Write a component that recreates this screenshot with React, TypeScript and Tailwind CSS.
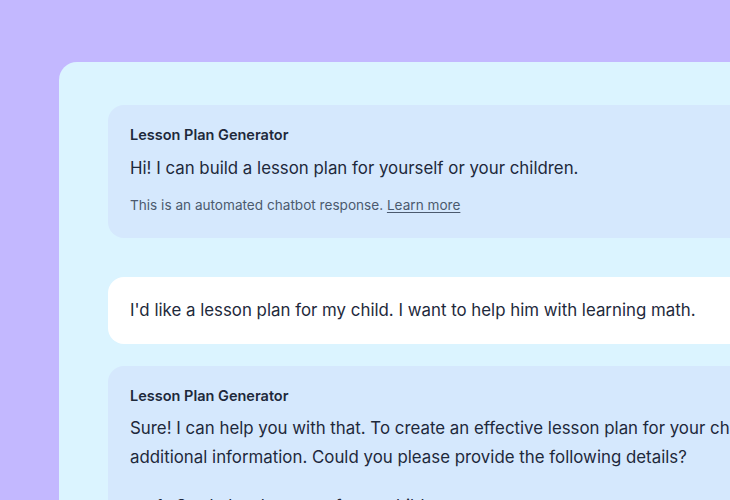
export default function App() {
    return (
        <div className="w-[730px] h-[500px] overflow-hidden bg-[#c3b8ff] pl-[59px] pt-[62px] font-['Inter',sans-serif]">
            <div className="w-[900px] h-[600px] bg-[#dbf4ff] rounded-[18px] pl-[49px] pt-[43px] flex flex-col">
                <div className="w-[820px] bg-[#d5e8fd] rounded-2xl pl-[22px] pt-5 pb-[23px]">
                    <p className="text-[14.5px] font-semibold text-[#1e293b] leading-5">Lesson Plan Generator</p>
                    <p className="mt-[9px] text-[16.85px] leading-7 text-[#1e293b]">Hi! I can build a lesson plan for yourself or your children.</p>
                    <p className="mt-[13px] text-[13.6px] leading-5 text-[#4b5a6e]">
                        This is an automated chatbot response. <span className="underline underline-offset-2">Learn more</span>
                    </p>
                </div>
                <div className="mt-[39px] w-[820px] bg-white rounded-2xl pl-[22px] py-5">
                    <p className="text-[16.85px] leading-[27px] text-[#1e293b]">I'd like a lesson plan for my child. I want to help him with learning math.</p>
                </div>
                <div className="mt-[22px] w-[820px] bg-[#d5e8fd] rounded-2xl pl-[22px] pt-5">
                    <p className="text-[14.5px] font-semibold text-[#1e293b] leading-5">Lesson Plan Generator</p>
                    <p className="mt-[8px] text-[16.85px] leading-[29px] text-[#1e293b] whitespace-nowrap">
                        Sure! I can help you with that. To create an effective lesson plan for your child, I'll need some
                        <br />
                        additional information. Could you please provide the following details?
                    </p>
                    <ol className="mt-[20px] pl-[25px] text-[16.85px] leading-[29px] text-[#1e293b] list-decimal list-inside">
                        <li>Grade level or age of your child</li>
                    </ol>
                </div>
            </div>
        </div>
    );
}
